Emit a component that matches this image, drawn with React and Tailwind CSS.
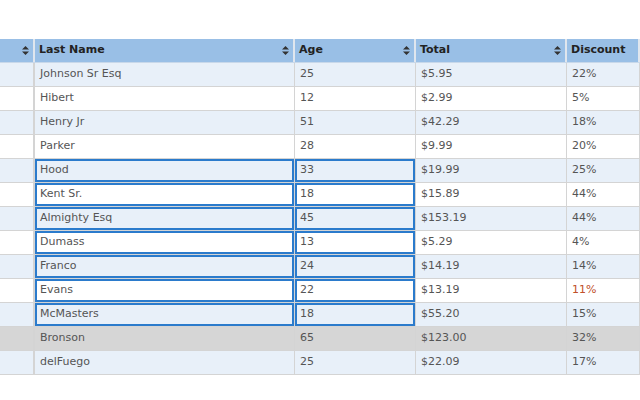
const rows = [
  ["Johnson Sr Esq","25","$5.95","22%"],
  ["Hibert","12","$2.99","5%"],
  ["Henry Jr","51","$42.29","18%"],
  ["Parker","28","$9.99","20%"],
  ["Hood","33","$19.99","25%"],
  ["Kent Sr.","18","$15.89","44%"],
  ["Almighty Esq","45","$153.19","44%"],
  ["Dumass","13","$5.29","4%"],
  ["Franco","24","$14.19","14%"],
  ["Evans","22","$13.19","11%"],
  ["McMasters","18","$55.20","15%"],
  ["Bronson","65","$123.00","32%"],
  ["delFuego","25","$22.09","17%"],
];
const Sort = () => (
  <svg width="7" height="9" viewBox="0 0 7 9"><path d="M3.5 0L7 3.5H0z M3.5 9L0 5.5H7z" fill="#333"/></svg>
);
export default function App() {
  const cols = "grid grid-cols-[35px_260px_121px_151px_73px]";
  return (
    <div className="w-[640px] h-[400px] bg-white overflow-hidden pt-[39px] text-[11px] text-[#555]" style={{fontFamily:"'DejaVu Sans', Verdana, sans-serif"}}>
      <div className={`${cols} h-[24px] bg-[#99bfe6] text-[#222] font-bold border-b border-[#c8d8ea]`}>
        {["","Last Name","Age","Total","Discount"].map((h,i)=>(
          <div key={i} className="flex items-center justify-between px-[4px] border-r-2 border-[#e0e6ee]">
            <span>{h}</span>{i<4 && <Sort/>}
          </div>
        ))}
      </div>
      {rows.map((r,i)=>{
        const sel = i>=4 && i<=10;
        const bg = i===11 ? "bg-[#d6d6d6]" : i%2===0 ? "bg-[#e8f0f9]" : "bg-white";
        return (
          <div key={i} className={`${cols} h-[24px] ${bg}`}>
            <div className="border-r-2 border-b border-[#d4d4d4]"></div>
            {r.map((c,j)=>{
              const isSel = sel && j<2;
              return (
                <div key={j} className="border-r border-b border-[#d4d4d4] relative">
                  <div className={`absolute inset-0 flex items-center px-[3px] ${isSel ? "border-2 border-[#2b7bcc]" : "pl-[5px]"} ${c==="11%" ? "text-[#c0502a]" : ""}`}>{c}</div>
                </div>
              );
            })}
          </div>
        );
      })}
    </div>
  );
}
